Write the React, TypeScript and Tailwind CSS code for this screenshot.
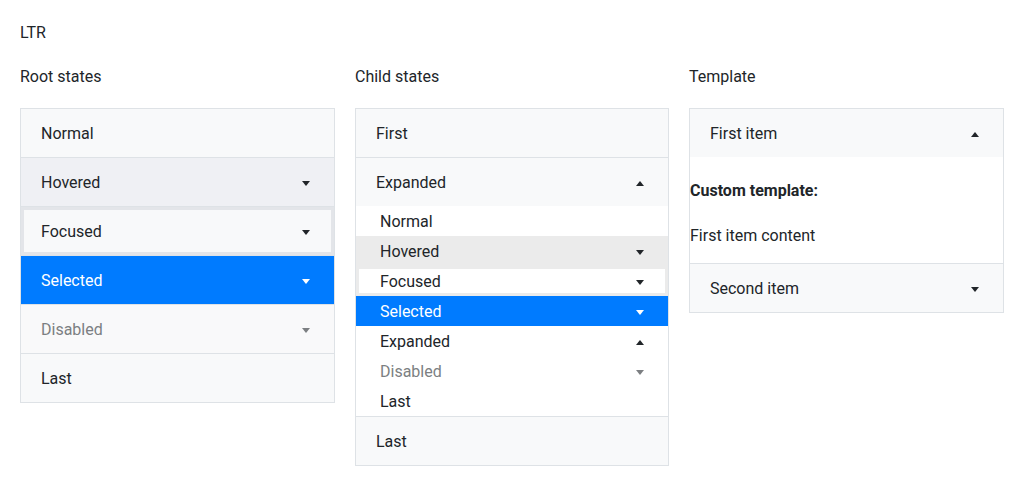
import React from "react";

const Down = ({ color = "#212529" }: { color?: string }) => (
  <svg width="8" height="5" viewBox="0 0 8 5" className="shrink-0">
    <path d="M0 0 L8 0 L4 5 Z" fill={color} />
  </svg>
);
const Up = ({ color = "#212529" }: { color?: string }) => (
  <svg width="8" height="5" viewBox="0 0 8 5" className="shrink-0">
    <path d="M0 5 L8 5 L4 0 Z" fill={color} />
  </svg>
);

const rootItem = "h-[49px] flex items-center justify-between pl-5 pr-6 pt-[2px] border-b border-[#dee2e6]";
const head = "h-[48px] flex items-center justify-between pl-5 pr-6 pt-[2px] bg-[#f8f9fa]";
const sub = "h-[30px] flex items-center justify-between pl-6 pr-6 pt-[2px]";

export default function App() {
  return (
    <div
      className="w-[1024px] h-[486px] bg-white text-[#212529] text-[16px] leading-[24px] px-5 pt-[21px]"
      style={{ fontFamily: "Roboto, 'Noto Sans', sans-serif" }}
    >
      <div>LTR</div>
      <div className="grid grid-cols-[315px_314px_315px] gap-[20px] mt-[20px]">
        {/* Root states */}
        <div>
          <div>Root states</div>
          <div className="mt-[19px] border border-[#dee2e6] border-b-0">
            <div className={`${rootItem} bg-[#f8f9fa]`}>
              <span>Normal</span>
            </div>
            <div className={`${rootItem} bg-[#eff0f4]`}>
              <span>Hovered</span>
              <Down />
            </div>
            <div className={`${rootItem} bg-[#f8f9fa] shadow-[inset_0_0_0_3px_#e3e5e9]`}>
              <span>Focused</span>
              <Down />
            </div>
            <div className={`${rootItem} bg-[#007bff] text-white border-[#007bff]`}>
              <span>Selected</span>
              <Down color="#ffffff" />
            </div>
            <div className={`${rootItem} bg-[#f9f9fa] text-[#7c7f82]`}>
              <span>Disabled</span>
              <Down color="#7c7f82" />
            </div>
            <div className={`${rootItem} bg-[#f8f9fa]`}>
              <span>Last</span>
            </div>
          </div>
        </div>

        {/* Child states */}
        <div>
          <div>Child states</div>
          <div className="mt-[19px] border border-[#dee2e6] border-b-0">
            <div className={`${rootItem} bg-[#f8f9fa]`}>
              <span>First</span>
            </div>
            <div className={head}>
              <span>Expanded</span>
              <Up />
            </div>
            <div className="bg-white border-b border-[#dee2e6]">
              <div className={sub}>
                <span>Normal</span>
              </div>
              <div className={`${sub} bg-[#ebebeb]`}>
                <span>Hovered</span>
                <Down />
              </div>
              <div className={`${sub} bg-white shadow-[inset_0_0_0_3px_#ebebeb]`}>
                <span>Focused</span>
                <Down />
              </div>
              <div className={`${sub} bg-[#007bff] text-white`}>
                <span>Selected</span>
                <Down color="#ffffff" />
              </div>
              <div className={sub}>
                <span>Expanded</span>
                <Up />
              </div>
              <div className={`${sub} text-[#7c7f82]`}>
                <span>Disabled</span>
                <Down color="#7c7f82" />
              </div>
              <div className={sub}>
                <span>Last</span>
              </div>
            </div>
            <div className={`${rootItem} bg-[#f8f9fa]`}>
              <span>Last</span>
            </div>
          </div>
        </div>

        {/* Template */}
        <div>
          <div>Template</div>
          <div className="mt-[19px] border border-[#dee2e6] border-b-0">
            <div className={head}>
              <span>First item</span>
              <Up />
            </div>
            <div className="bg-white border-b border-[#dee2e6] pt-[22px] pb-[15px]">
              <div className="font-bold">Custom template:</div>
              <div className="mt-[21px]">First item content</div>
            </div>
            <div className={`${rootItem} bg-[#f8f9fa]`}>
              <span>Second item</span>
              <Down />
            </div>
          </div>
        </div>
      </div>
    </div>
  );
}
